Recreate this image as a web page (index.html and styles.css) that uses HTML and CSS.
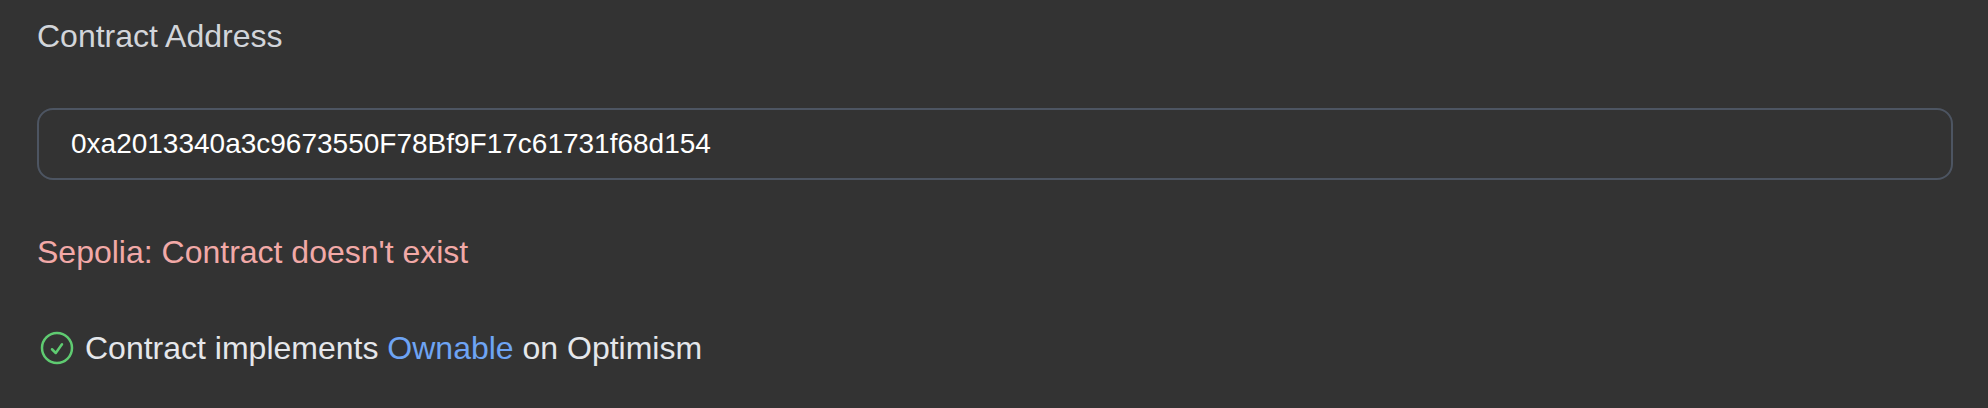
FILE: index.html
```html
<!DOCTYPE html>
<html lang="en">
<head>
<meta charset="utf-8">
<title>Contract Address</title>
<link rel="stylesheet" href="styles.css">
</head>
<body>
<main class="form">
  <label class="label" for="address">Contract Address</label>
  <input class="address" id="address" type="text" spellcheck="false" value="0xa2013340a3c9673550F78Bf9F17c61731f68d154">
  <p class="error">Sepolia: Contract doesn't exist</p>
  <p class="success">
    <svg class="check" viewBox="0 0 24 24" aria-hidden="true"><path d="M9 12.75 11.25 15 15 9.75M21 12a9 9 0 1 1-18 0 9 9 0 0 1 18 0Z"/></svg>
    <span>Contract implements <a class="link" href="#">Ownable</a> on Optimism</span>
  </p>
</main>
</body>
</html>
```
FILE: styles.css
```css
body {
  margin: 0;
  background: #333333;
  font-family: "Liberation Sans", Arial, sans-serif;
}

.form {
  box-sizing: border-box;
  display: flex;
  flex-direction: column;
  height: 408px;
  padding: 12px 35px 0 37px;
  font-size: 32px;
  line-height: 48px;
}

.label {
  color: #d2d5da;
}

.address {
  box-sizing: border-box;
  width: 100%;
  height: 72px;
  margin: 48px 0 0;
  padding: 0 32px;
  border: 2px solid #4d5562;
  border-radius: 16px;
  outline: none;
  background: transparent;
  color: #ffffff;
  font: 28px "Liberation Sans", Arial, sans-serif;
}

.error {
  margin: 48px 0 0;
  color: #f2a9a7;
}

.success {
  display: flex;
  align-items: center;
  margin: 48px 0 0;
  color: #e5e7eb;
}

.check {
  width: 40px;
  height: 40px;
  margin-right: 8px;
  fill: none;
  stroke: #5fcb71;
  stroke-width: 1.5;
  stroke-linecap: round;
  stroke-linejoin: round;
}

.link {
  color: #6ea4f4;
  text-decoration: none;
}
```
